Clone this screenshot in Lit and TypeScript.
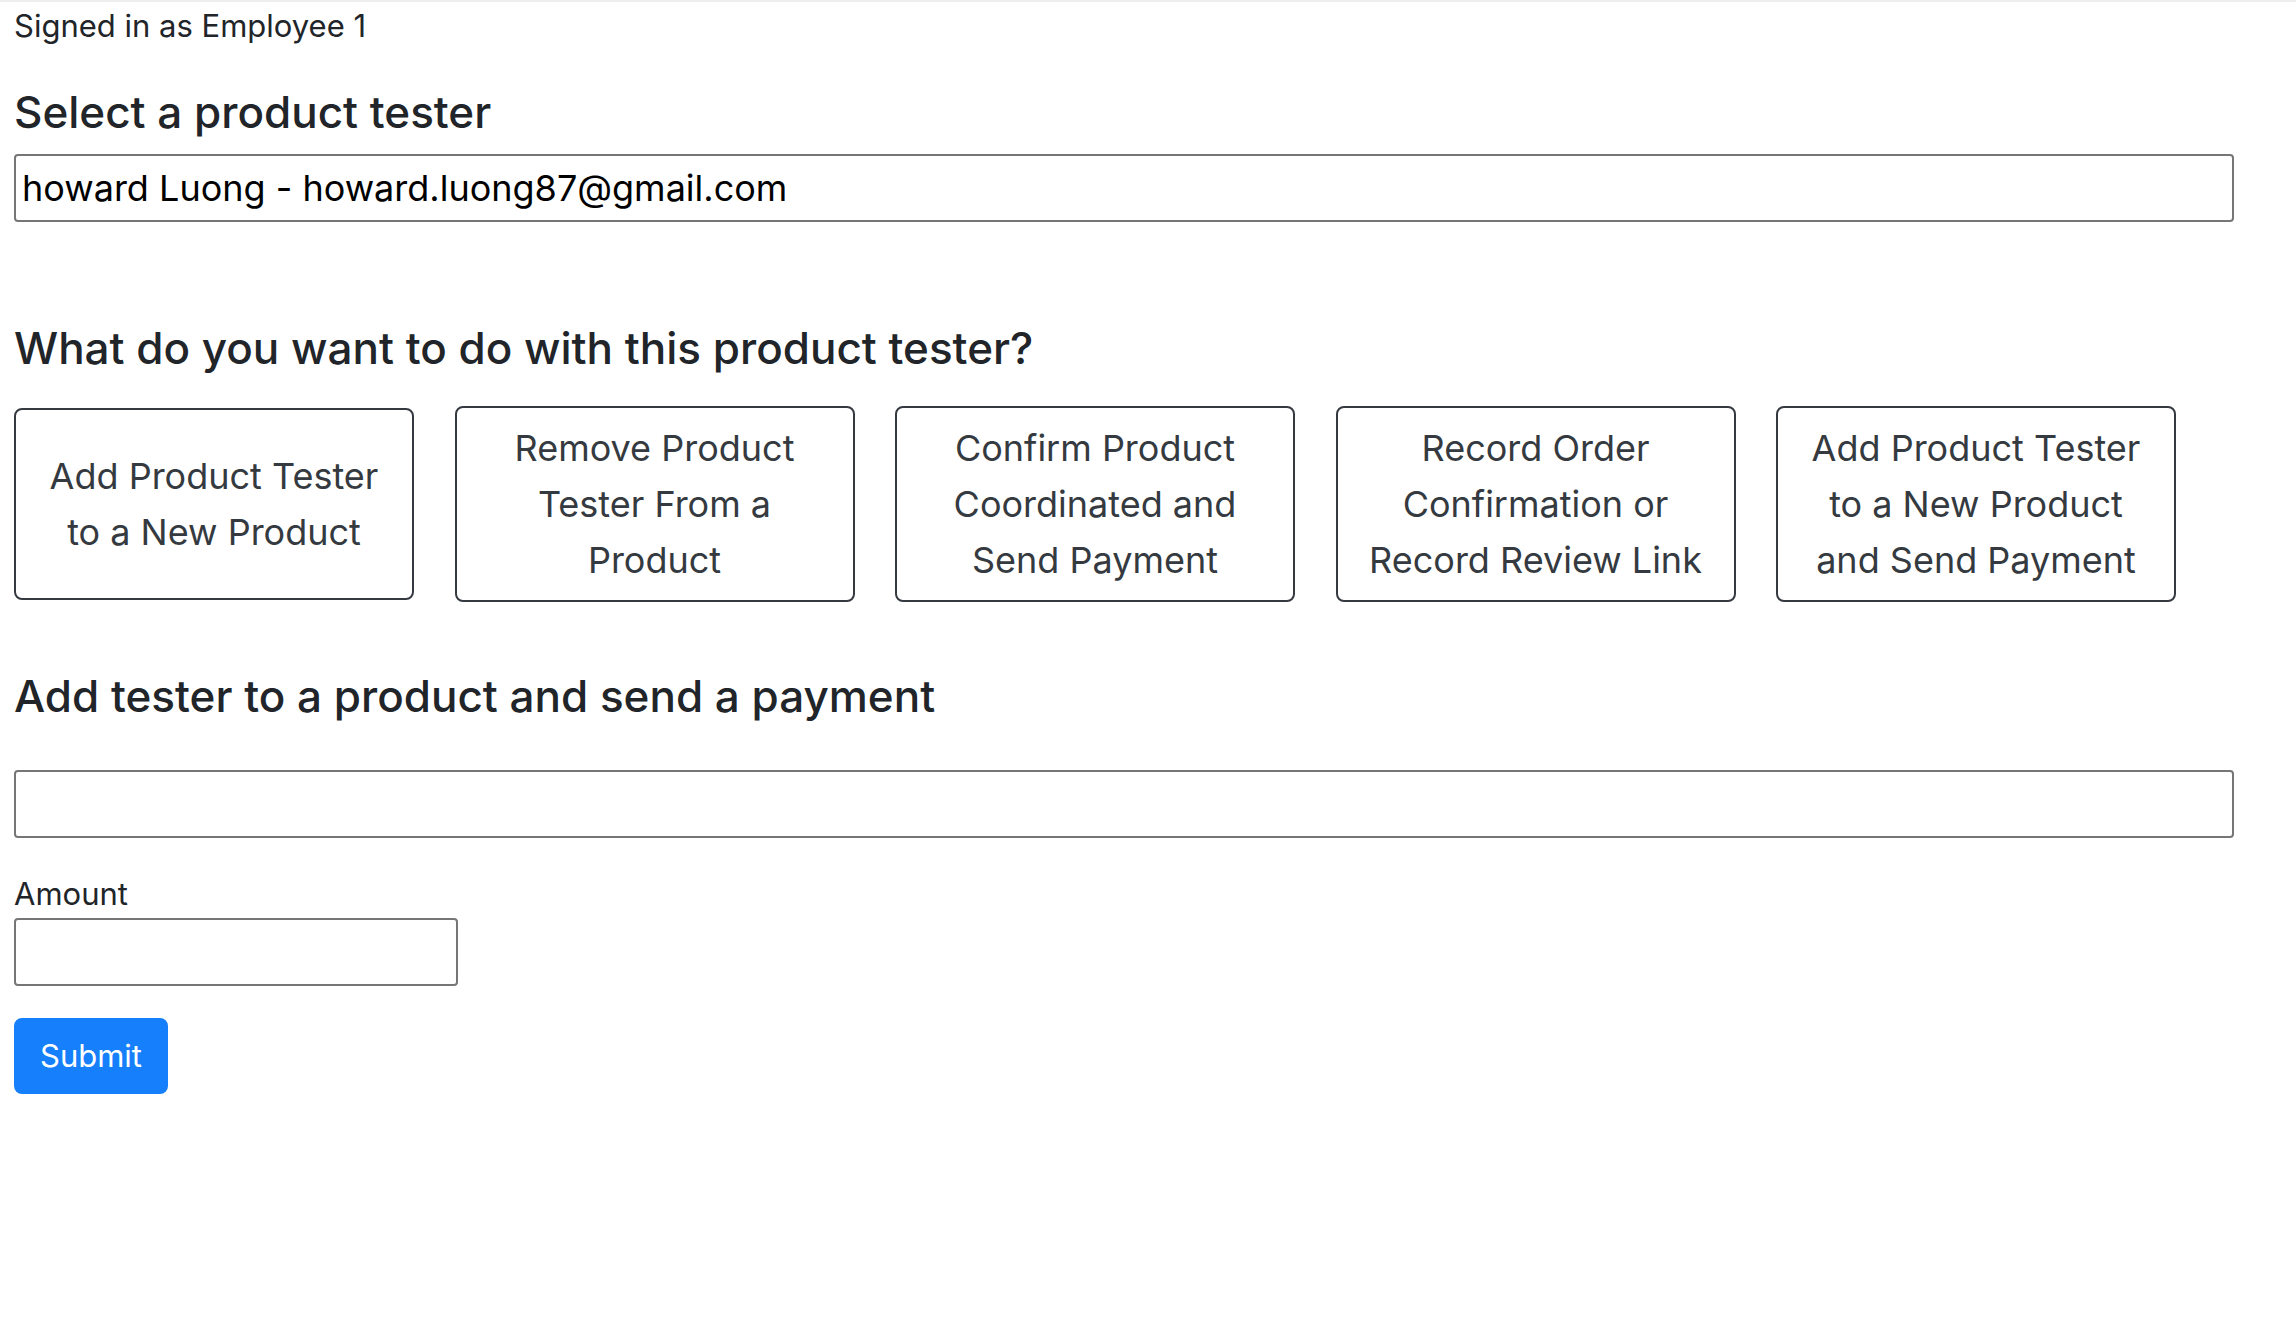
import { LitElement, html, css } from "lit";
import { customElement, state } from "lit/decorators.js";

const ACTIONS = [
  "Add Product Tester to a New Product",
  "Remove Product Tester From a Product",
  "Confirm Product Coordinated and Send Payment",
  "Record Order Confirmation or Record Review Link",
  "Add Product Tester to a New Product and Send Payment",
];

@customElement("app-root")
export class AppRoot extends LitElement {
  static styles = css`
    :host {
      display: block;
      border-top: 2px solid #eeeeee;
      background: #ffffff;
      color: #212529;
      font-family: Inter, "Liberation Sans", sans-serif;
      font-size: 31px;
      line-height: 48px;
    }
    * {
      box-sizing: border-box;
    }
    .page {
      padding: 0 62px 0 14px;
    }
    .status {
      margin: 0;
    }
    .heading {
      margin: 0;
      font-size: 44px;
      font-weight: 500;
      line-height: 56px;
    }
    .heading-label {
      display: block;
    }
    .tester {
      padding-top: 34px;
    }
    .tester .field {
      margin-top: 14px;
    }
    .actions {
      padding-top: 98px;
    }
    .payment {
      padding-top: 66px;
    }
    .payment .field {
      margin-top: 46px;
    }
    .payment .amount .field {
      width: 444px;
      max-width: 100%;
      margin-top: 0;
    }
    .field {
      display: block;
      width: 100%;
      height: 68px;
      margin: 0;
      padding: 2px 6px;
      border: 2px solid #767676;
      border-radius: 4px;
      background: #ffffff;
      color: #000000;
      font-family: inherit;
      font-size: 36px;
    }
    .choices {
      display: flex;
      align-items: center;
      justify-content: space-between;
      margin-top: 30px;
      padding-right: 58px;
    }
    .choice {
      flex: 0 1 400px;
      min-height: 192px;
      margin: 0;
      padding: 12px 24px;
      border: 2px solid #343a40;
      border-radius: 8px;
      background: transparent;
      color: #343a40;
      font-family: inherit;
      font-size: 36px;
      line-height: 56px;
      text-align: center;
      cursor: pointer;
    }
    .amount {
      margin-top: 32px;
    }
    .amount-label {
      display: block;
    }
    .submit {
      display: block;
      margin: 32px 0 0;
      padding: 12px 24px;
      border: 2px solid #167ffc;
      border-radius: 8px;
      background: #167ffc;
      color: #ffffff;
      font-family: inherit;
      font-size: 31px;
      line-height: 48px;
      cursor: pointer;
    }
  `;

  @state() private tester = "howard Luong - howard.luong87@gmail.com";
  @state() private action = ACTIONS[4];

  render() {
    return html`
      <main class="page">
        <p class="status">Signed in as Employee 1</p>

        <section class="tester">
          <h4 class="heading">
            <label class="heading-label" for="tester">Select a product tester</label>
          </h4>
          <input
            class="field"
            id="tester"
            type="text"
            .value=${this.tester}
            @input=${(e: Event) => (this.tester = (e.target as HTMLInputElement).value)}
          />
        </section>

        <section class="actions">
          <h4 class="heading">What do you want to do with this product tester?</h4>
          <div class="choices">
            ${ACTIONS.map(
              (name) => html`
                <button class="choice" type="button" @click=${() => (this.action = name)}>${name}</button>
              `
            )}
          </div>
        </section>

        <form class="payment" @submit=${(e: Event) => e.preventDefault()}>
          <h4 class="heading">
            <label class="heading-label" for="product">Add tester to a product and send a payment</label>
          </h4>
          <input class="field" id="product" type="text" />
          <div class="amount">
            <label class="amount-label" for="amount">Amount</label>
            <input class="field" id="amount" type="text" inputmode="decimal" />
          </div>
          <button class="submit" type="submit">Submit</button>
        </form>
      </main>
    `;
  }
}
